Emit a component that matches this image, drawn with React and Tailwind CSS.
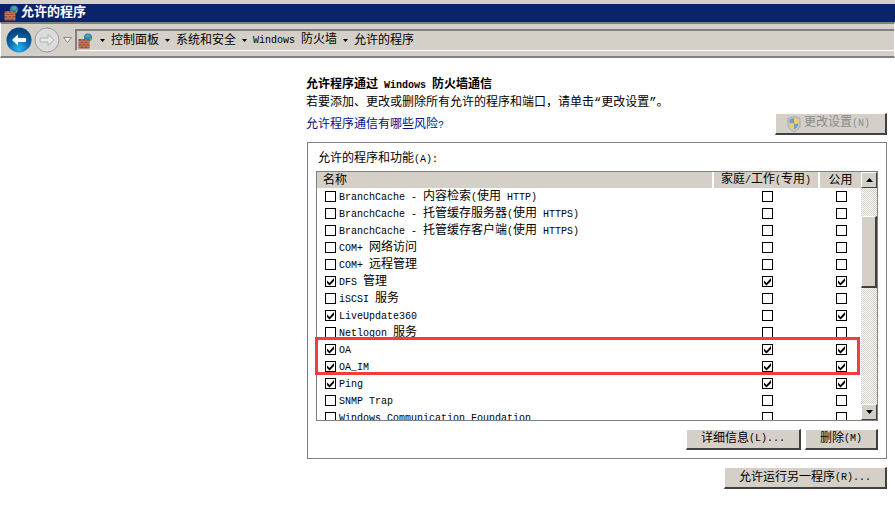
import React from "react";

const FONT = { latin: "text-[10px]" };

const rows = [
  { name: "BranchCache - 内容检索(使用 HTTP)", home: false, pub: false, on: false },
  { name: "BranchCache - 托管缓存服务器(使用 HTTPS)", home: false, pub: false, on: false },
  { name: "BranchCache - 托管缓存客户端(使用 HTTPS)", home: false, pub: false, on: false },
  { name: "COM+ 网络访问", home: false, pub: false, on: false },
  { name: "COM+ 远程管理", home: false, pub: false, on: false },
  { name: "DFS 管理", home: true, pub: true, on: true },
  { name: "iSCSI 服务", home: false, pub: false, on: false },
  { name: "LiveUpdate360", home: false, pub: true, on: true },
  { name: "Netlogon 服务", home: false, pub: false, on: false },
  { name: "OA", home: true, pub: true, on: true },
  { name: "OA_IM", home: true, pub: true, on: true },
  { name: "Ping", home: true, pub: true, on: true },
  { name: "SNMP Trap", home: false, pub: false, on: false },
  { name: "Windows Communication Foundation", home: false, pub: false, on: false },
];

// SimSun look: latin runs are half the width of the CJK ones
const T = ({ children }) => (
  <>
    {String(children)
      .split(/([\x00-\x7f]+)/)
      .map((part, i) =>
        i % 2 === 1 ? (
          <span key={i} className={FONT.latin}>
            {part}
          </span>
        ) : (
          part
        )
      )}
  </>
);

const Check = ({ checked }) => (
  <span className="flex h-[11px] w-[11px] shrink-0 items-center justify-center border border-black bg-white">
    {checked && (
      <svg width="9" height="9" viewBox="0 0 9 9">
        <path d="M1 3.500l2.500 2.500L8 1v3L3.500 8.500 1 6z" fill="#000" />
      </svg>
    )}
  </span>
);

const WallIcon = ({ size = 16 }) => (
  <svg width={size} height={size} viewBox="0 0 16 16">
    <circle cx="10" cy="4.500" r="4" fill="#2f7fc8" />
    <path d="M8 2.200l3-1 1.500 2-2 1.500-2-.5zM11.500 5.500l2-.5-.8 2.400-1.600.6z" fill="#57b84a" />
    <rect x="0.500" y="6" width="11" height="9.500" fill="#a0472a" />
    <path d="M0.500 8.300h11M0.500 10.700h11M0.500 13.100h11M4 6v2.300M8 6v2.300M2 8.300v2.400M6 8.300v2.400M10 8.300v2.400M4 10.700v2.400M8 10.700v2.400M2 13.100v2.400M6 13.100v2.400M10 13.100v2.400" stroke="#d8b8a0" strokeWidth="0.5" fill="none" />
  </svg>
);

const Shield = () => (
  <svg width="14" height="16" viewBox="0 0 14 16">
    <path d="M7 .5l6 2v6c0 3.500-3 6-6 7-3-1-6-3.500-6-7v-6z" fill="#c9c9c9" stroke="#a8a8a8" />
    <path d="M7 2v5.500H2.500V3.500zM7 7.500h4.500c0 3-2.500 5-4.500 6z" fill="#6d9fd0" />
    <path d="M7 2l4.500 1.500v4H7zM7 7.500v6c-2-1-4.500-3-4.500-6z" fill="#f0cf5a" />
  </svg>
);

const Button = ({ className, disabled, children }) => (
  <button
    className={`flex items-center justify-center border-t border-l border-t-white border-l-white border-r-2 border-b-2 border-r-[#404040] border-b-[#404040] bg-[#d4d0c8] ${
      disabled ? "text-[#8a8a8a]" : "text-black"
    } ${className}`}
  >
    {children}
  </button>
);

const Arrow = ({ dir = "up" }) => (
  <div className="flex h-4 w-4 items-center justify-center border-t border-l border-t-white border-l-white border-r border-b border-r-[#404040] border-b-[#404040] bg-[#d4d0c8]">
    <svg width="7" height="4" viewBox="0 0 7 4">
      <path d={dir === "up" ? "M3.500 0L7 4H0z" : "M0 0h7L3.500 4z"} fill="#000" />
    </svg>
  </div>
);

const Dither = ({ className }) => (
  <div className={`bg-[repeating-conic-gradient(#d4d0c8_0_25%,#ffffff_0_50%)] bg-[length:2px_2px] ${className}`} />
);

const NavButtons = () => (
  <div className="flex items-center">
    <div className="relative flex h-[26px] w-[55px] items-center rounded-full bg-[#d0cdc6]">
      <svg width="26" height="26" viewBox="0 0 26 26" className="shrink-0">
        <defs>
          <radialGradient id="backBlue" cx="50%" cy="85%" r="70%">
            <stop offset="0%" stopColor="#2bb6ee" />
            <stop offset="55%" stopColor="#0a6eb4" />
            <stop offset="100%" stopColor="#06447e" />
          </radialGradient>
        </defs>
        <circle cx="13" cy="13" r="12.500" fill="url(#backBlue)" />
        <path d="M6 13l6-5.500v3.500h8v4h-8v3.500z" fill="#fff" />
      </svg>
      <svg width="26" height="26" viewBox="0 0 26 26" className="ml-[2px] shrink-0">
        <circle cx="13" cy="13" r="12" fill="#dcdcdc" stroke="#9c9c9c" />
        <path d="M20 13l-6-5.500v3.500H6v4h8v3.500z" fill="#e8e8e8" stroke="#b0b0b0" />
      </svg>
    </div>
    <svg width="9" height="6" viewBox="0 0 9 6" className="ml-[2px]">
      <path d="M.5.5h8L4.500 5.500z" fill="#f0f0f0" stroke="#8a8a8a" />
    </svg>
  </div>
);

const Crumb = ({ children }) => (
  <>
    <svg width="5" height="3" viewBox="0 0 5 3" className="mx-[6px] shrink-0">
      <path d="M0 0h5L2.500 3z" fill="#000" />
    </svg>
    <span className="whitespace-pre">
      <T>{children}</T>
    </span>
  </>
);

export default function App() {
  return (
    <div
      className="flex h-[518px] w-[895px] flex-col overflow-hidden bg-white text-[12px] leading-[14px] text-black"
      style={{ fontFamily: '"Liberation Mono", "Noto Sans CJK SC", monospace' }}
    >
      <div className="h-[4px] shrink-0 bg-[#d4d0c8]" />
      <div className="flex h-[18px] shrink-0 items-center gap-[1px] bg-[#0a246a] pl-[4px] text-[13px] font-bold text-white">
        <WallIcon />
        <span>允许的程序</span>
      </div>
      <div className="flex h-[36px] shrink-0 items-center border-t-2 border-b-2 border-t-[#808080] border-b-[#808080] border-l border-r border-l-white border-r-white bg-[#d4d0c8] pl-[5px]">
        <NavButtons />
        <div className="ml-[3px] flex h-[22px] flex-1 items-center border-t-2 border-l-2 border-t-[#808080] border-l-[#808080] border-b border-b-white">
          <span className="ml-[1px]">
            <WallIcon />
          </span>
          <Crumb>控制面板</Crumb>
          <Crumb>系统和安全</Crumb>
          <Crumb>Windows 防火墙</Crumb>
          <Crumb>允许的程序</Crumb>
        </div>
      </div>

      <div className="flex flex-1 flex-col pl-[306px] pr-[8px] pt-[20px]">
        <h1 className="h-[14px] whitespace-pre font-bold">
          <T>允许程序通过 Windows 防火墙通信</T>
        </h1>
        <p className="mt-[4px] h-[14px]">若要添加、更改或删除所有允许的程序和端口，请单击“更改设置”。</p>
        <div className="mt-[3px] flex items-start justify-between">
          <a className="mt-[5px] h-[14px] text-[#000f8c]">
            允许程序通信有哪些风险<span className={FONT.latin}>?</span>
          </a>
          <Button disabled className="h-[22px] w-[112px] gap-[3px] pr-[4px]">
            <Shield />
            <span className="whitespace-pre">
              更改设置<span className={FONT.latin}>(N)</span>
            </span>
          </Button>
        </div>

        <section className="ml-[1px] mt-[7px] flex h-[317px] flex-col border border-[#808080] px-[8px]">
          <div className="mt-[9px] h-[14px] whitespace-pre pl-[2px]">
            <T>允许的程序和功能(A):</T>
          </div>
          <div className="mt-[5px] flex h-[250px] w-[562px] border-t border-l border-b border-[#808080]">
            <div className="relative flex h-full w-[544px] flex-col">
              <div className="flex h-[16px] shrink-0 bg-[#d4d0c8]">
                <div className="w-[397px] border-r-2 border-r-white pl-[6px] pt-[2px]">名称</div>
                <div className="w-[106px] overflow-hidden border-r-2 border-r-white pt-[1px] text-center whitespace-pre">
                  <T>家庭/工作(专用)</T>
                </div>
                <div className="flex-1 pt-[2px] text-center">公用</div>
              </div>
              <div className="min-h-0 flex-1 overflow-hidden">
                {rows.map((row) => (
                  <div key={row.name} className="flex h-[17px] items-center">
                    <div className="flex w-[400px] shrink-0 items-center gap-[3px] pl-[8px] whitespace-pre">
                      <Check checked={row.on} />
                      <span className="mt-[2px]">
                        <T>{row.name}</T>
                      </span>
                    </div>
                    <div className="flex w-[101px] shrink-0 justify-center">
                      <Check checked={row.home} />
                    </div>
                    <div className="flex w-[43px] shrink-0 pl-[18px]">
                      <Check checked={row.pub} />
                    </div>
                  </div>
                ))}
              </div>
              {/* annotation from the screenshot */}
              <div className="absolute left-[-2px] top-[165px] h-[38px] w-[545px] border-[3px] border-[#f53b3b]" />
            </div>
            <div className="flex w-[17px] flex-col border-r border-[#808080]">
              <Arrow />
              <Dither className="h-[28px]" />
              <div className="h-[72px] border-t border-l border-t-white border-l-white border-r-2 border-b-2 border-r-[#404040] border-b-[#404040] bg-[#d4d0c8]" />
              <Dither className="flex-1" />
              <Arrow dir="down" />
            </div>
          </div>
          <div className="mt-[8px] flex justify-end gap-[4px]">
            <Button className="h-[21px] w-[115px] whitespace-pre">
              <T>详细信息(L)...</T>
            </Button>
            <Button className="h-[21px] w-[73px] whitespace-pre">
              <T>删除(M)</T>
            </Button>
          </div>
        </section>

        <div className="mt-[8px] flex justify-end">
          <Button className="h-[22px] w-[163px] whitespace-pre">
            <T>允许运行另一程序(R)...</T>
          </Button>
        </div>
      </div>
    </div>
  );
}
